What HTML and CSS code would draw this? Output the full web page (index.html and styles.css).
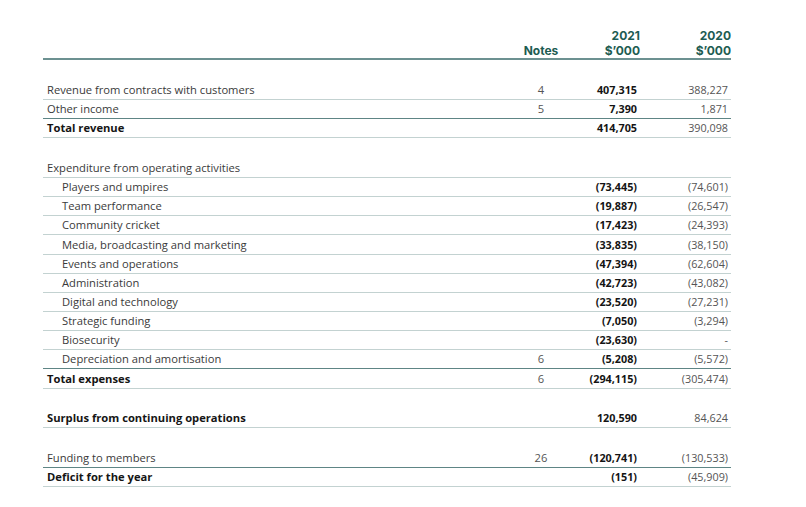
FILE: index.html
```html
<!DOCTYPE html>
<html lang="en">
<head>
<meta charset="utf-8">
<title>Statement of Comprehensive Income</title>
<link rel="stylesheet" href="styles.css">
</head>
<body>
<main class="page">
<table class="fin">
  <colgroup>
    <col class="c-label"><col class="c-notes"><col class="c-cur"><col class="c-prev">
  </colgroup>
  <thead>
    <tr>
      <th class="label"></th>
      <th class="notes">Notes</th>
      <th class="num"><span class="hl">2021</span><span class="hl">$’000</span></th>
      <th class="num"><span class="hl">2020</span><span class="hl">$’000</span></th>
    </tr>
  </thead>
  <tbody>
    <tr class="spacer first"><td colspan="4"></td></tr>
    <tr><td class="label">Revenue from contracts with customers</td><td class="notes">4</td><td class="cur">407,315</td><td class="prev">388,227</td></tr>
    <tr class="dark"><td class="label">Other income</td><td class="notes">5</td><td class="cur">7,390</td><td class="prev">1,871</td></tr>
    <tr class="total"><td class="label">Total revenue</td><td class="notes"></td><td class="cur">414,705</td><td class="prev">390,098</td></tr>
    <tr class="spacer"><td colspan="4"></td></tr>
    <tr><td class="label">Expenditure from operating activities</td><td class="notes"></td><td class="cur"></td><td class="prev"></td></tr>
    <tr><td class="label sub">Players and umpires</td><td class="notes"></td><td class="cur">(73,445)</td><td class="prev">(74,601)</td></tr>
    <tr><td class="label sub">Team performance</td><td class="notes"></td><td class="cur">(19,887)</td><td class="prev">(26,547)</td></tr>
    <tr><td class="label sub">Community cricket</td><td class="notes"></td><td class="cur">(17,423)</td><td class="prev">(24,393)</td></tr>
    <tr><td class="label sub">Media, broadcasting and marketing</td><td class="notes"></td><td class="cur">(33,835)</td><td class="prev">(38,150)</td></tr>
    <tr><td class="label sub">Events and operations</td><td class="notes"></td><td class="cur">(47,394)</td><td class="prev">(62,604)</td></tr>
    <tr><td class="label sub">Administration</td><td class="notes"></td><td class="cur">(42,723)</td><td class="prev">(43,082)</td></tr>
    <tr><td class="label sub">Digital and technology</td><td class="notes"></td><td class="cur">(23,520)</td><td class="prev">(27,231)</td></tr>
    <tr><td class="label sub">Strategic funding</td><td class="notes"></td><td class="cur">(7,050)</td><td class="prev">(3,294)</td></tr>
    <tr><td class="label sub">Biosecurity</td><td class="notes"></td><td class="cur">(23,630)</td><td class="prev">-</td></tr>
    <tr class="dark"><td class="label sub">Depreciation and amortisation</td><td class="notes">6</td><td class="cur">(5,208)</td><td class="prev">(5,572)</td></tr>
    <tr class="total"><td class="label">Total expenses</td><td class="notes">6</td><td class="cur">(294,115)</td><td class="prev">(305,474)</td></tr>
    <tr class="spacer"><td colspan="4"></td></tr>
    <tr class="total"><td class="label">Surplus from continuing operations</td><td class="notes"></td><td class="cur">120,590</td><td class="prev">84,624</td></tr>
    <tr class="spacer"><td colspan="4"></td></tr>
    <tr class="dark"><td class="label">Funding to members</td><td class="notes">26</td><td class="cur">(120,741)</td><td class="prev">(130,533)</td></tr>
    <tr class="total"><td class="label">Deficit for the year</td><td class="notes"></td><td class="cur">(151)</td><td class="prev">(45,909)</td></tr>
  </tbody>
</table>
</main>
</body>
</html>
```
FILE: styles.css
```css
html, body {
  margin: 0;
  padding: 0;
  background: #ffffff;
}
body {
  font-family: "Open Sans", "DejaVu Sans", sans-serif;
  color: #3a3a3a;
}
.page {
  padding: 29px 0 0 43px;
}
.fin {
  border-collapse: collapse;
  table-layout: fixed;
  width: 688px;
}
.c-label { width: 462px; }
.c-notes { width: 72px; }
.c-cur { width: 63px; }
.c-prev { width: 91px; }

.fin th {
  font-family: "Inter", "Open Sans", sans-serif;
  font-size: 12px;
  font-weight: 700;
  color: #1d5c52;
  line-height: 14.5px;
  padding: 0;
  vertical-align: bottom;
  border-bottom: 2px solid #6c9191;
}
.fin th .hl { display: block; }
.fin th.notes { text-align: center; }
.fin th.num { text-align: right; }

.fin td {
  font-size: 11.2px;
  height: 18.15px;
  line-height: 14px;
  padding: 0;
  border-bottom: 1px solid #c3d2d1;
  vertical-align: middle;
  white-space: nowrap;
}
.fin td.label { padding-left: 4px; }
.fin td.sub { padding-left: 19px; }
.fin td.notes { text-align: center; color: #555; }
.fin td.cur { text-align: right; font-weight: 700; color: #141414; padding-right: 3px; font-size: 10.8px; }
.fin td.prev { text-align: right; color: #555; padding-right: 3px; font-size: 10.8px; }

.fin tr.spacer td { border-bottom: 0; height: 20.5px; }
.fin tr.spacer.first td { height: 21px; }
.fin tr.dark td { border-bottom: 1px solid #5e8585; }
.fin tr.total td.label { font-weight: 700; color: #151515; }
```
